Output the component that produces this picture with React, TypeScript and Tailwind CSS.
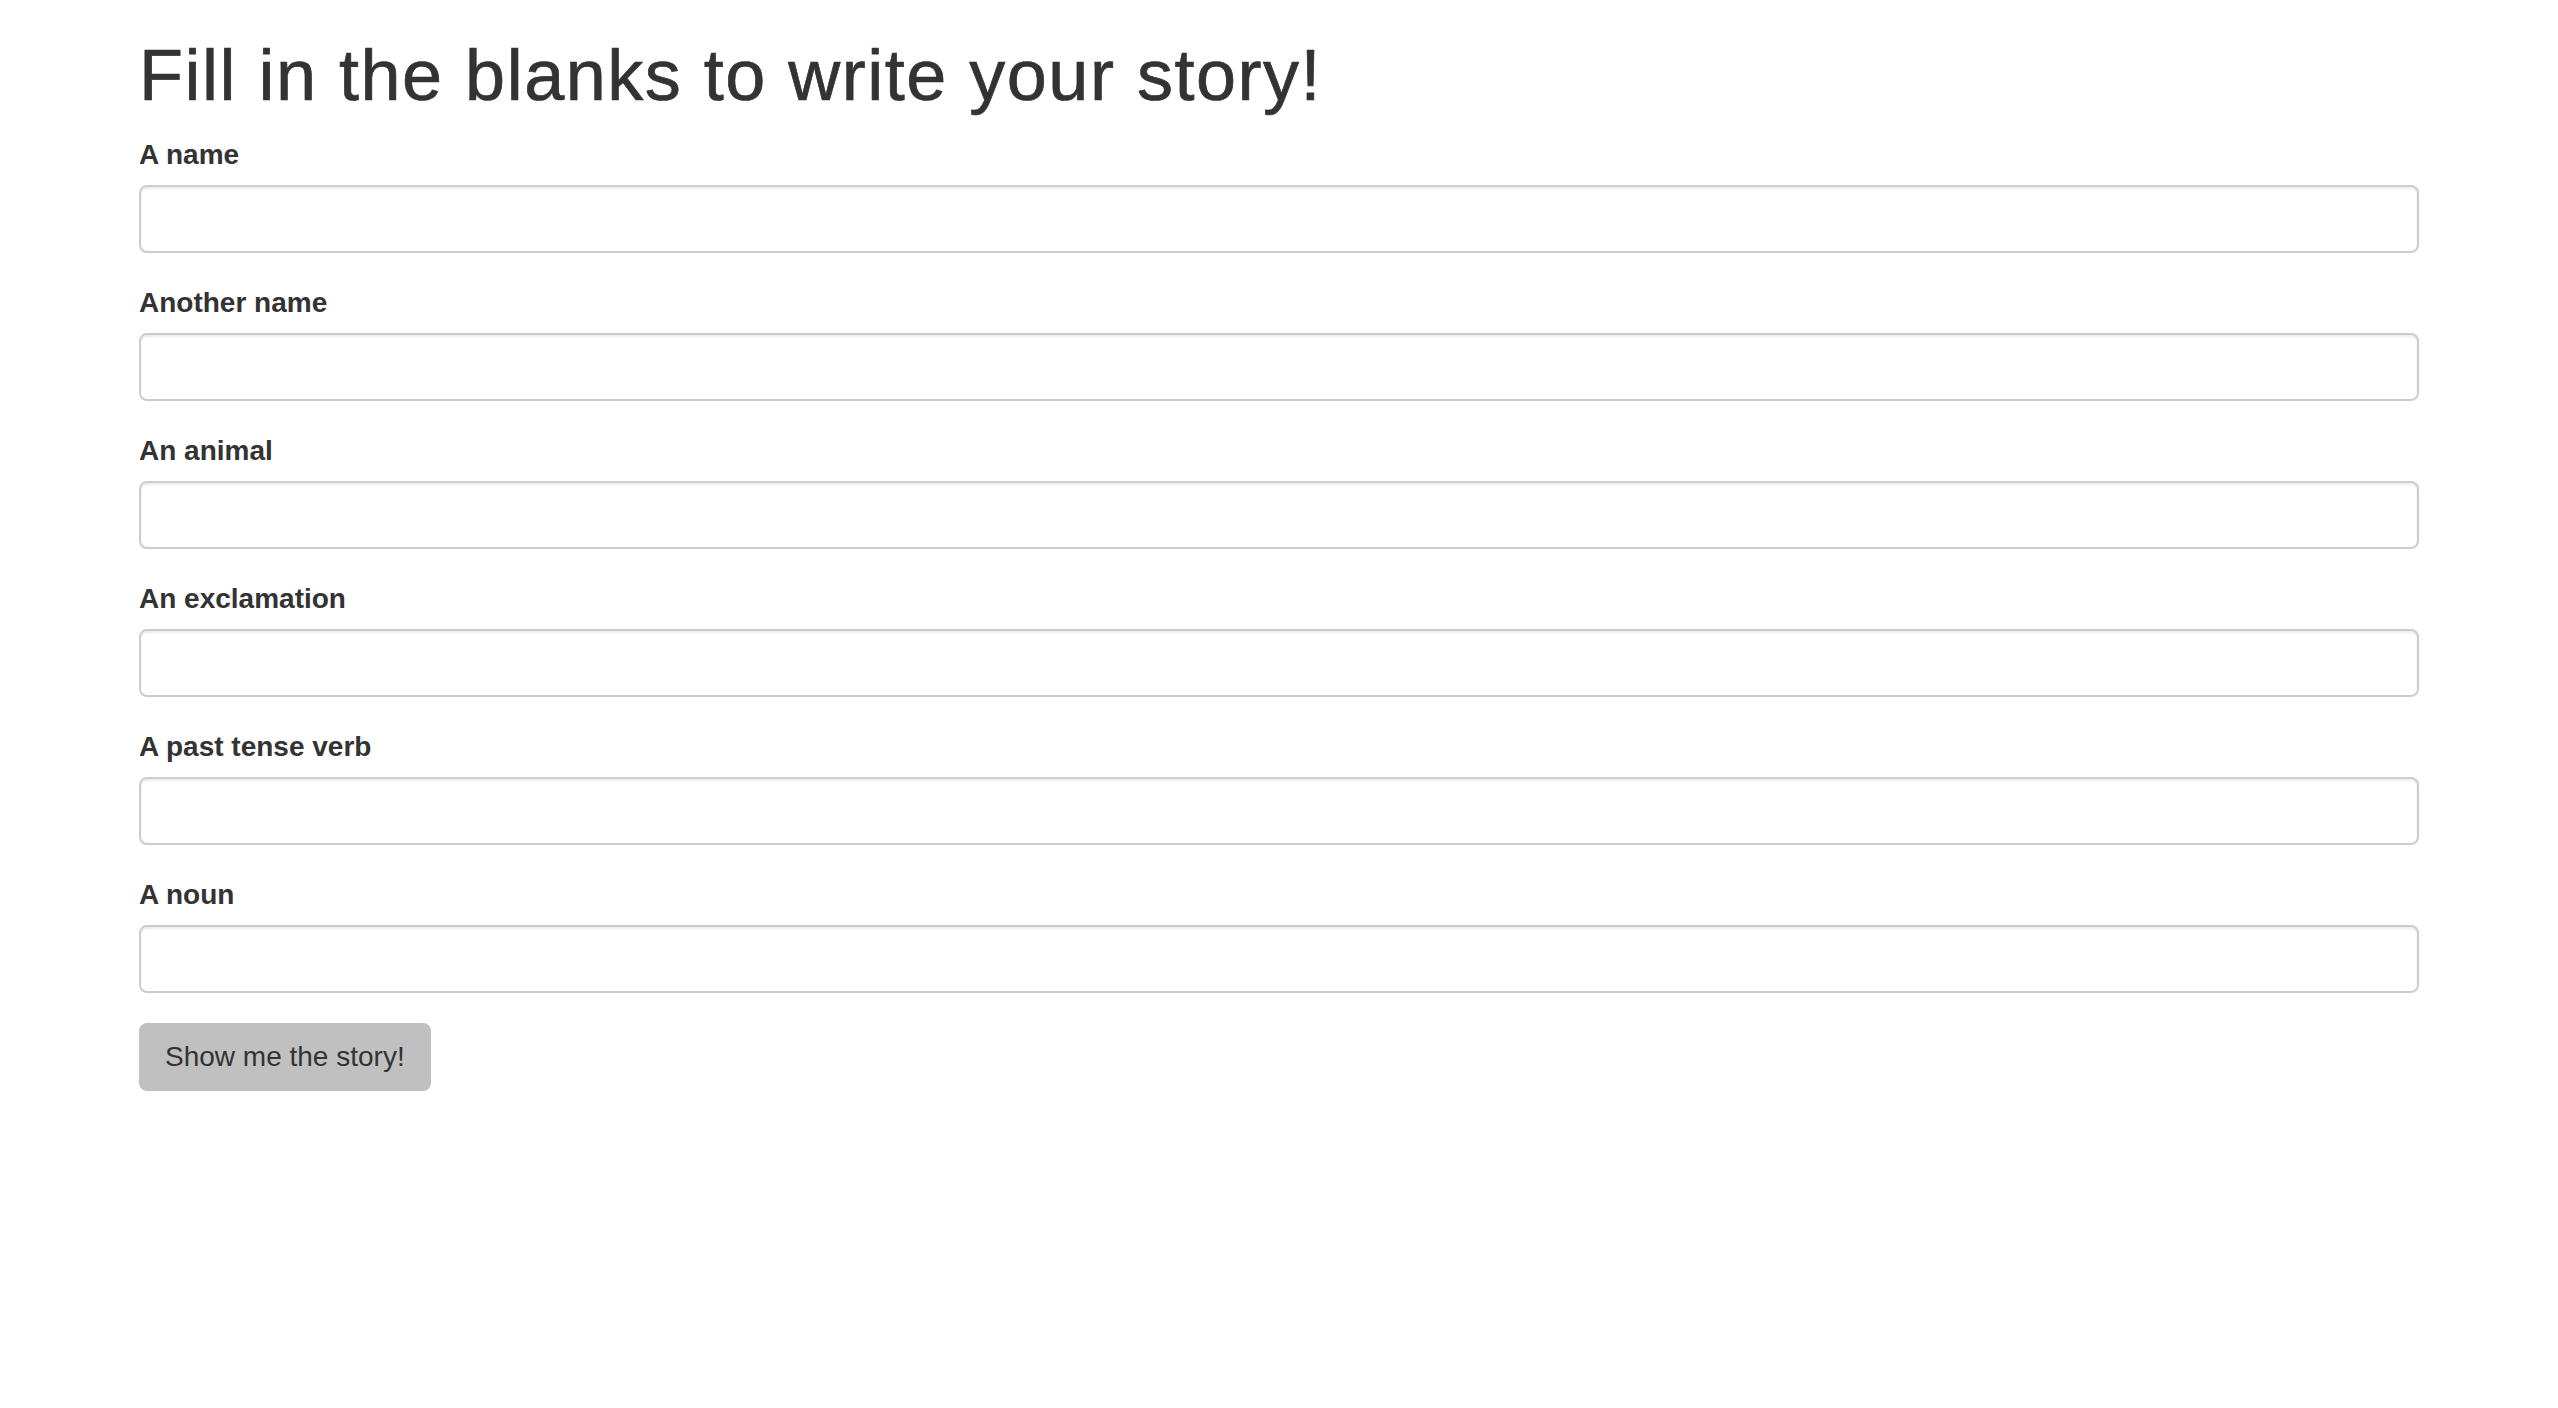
import React from "react";

const fields = [
  "A name",
  "Another name",
  "An animal",
  "An exclamation",
  "A past tense verb",
  "A noun",
];

export default function App() {
  return (
    <div className="min-h-screen bg-white text-[#333] font-['Liberation_Sans',Arial,sans-serif]">
      <div className="w-[2340px] mx-auto px-[30px]">
        <h1 className="mt-[36px] mb-[20px] text-[72px] leading-[1.1] font-medium tracking-[1.5px] [-webkit-text-stroke:0.7px_#333]">
          Fill in the blanks to write your story!
        </h1>
        <form onSubmit={(e) => e.preventDefault()}>
          {fields.map((f) => (
            <div key={f} className="mb-[30px]">
              <label className="inline-block mb-[10px] text-[28px] leading-[40px] font-bold">{f}</label>
              <input
                type="text"
                className="block w-full h-[68px] px-[24px] py-[12px] text-[28px] border-2 border-[#ccc] rounded-[8px] bg-white shadow-[inset_0_2px_2px_rgba(0,0,0,0.075)] outline-none"
              />
            </div>
          ))}
          <button
            type="submit"
            className="h-[68px] px-[24px] text-[28px] leading-[40px] text-[#333] bg-[#c0c0c0] border-2 border-[#c0c0c0] rounded-[8px]"
          >
            Show me the story!
          </button>
        </form>
      </div>
    </div>
  );
}
